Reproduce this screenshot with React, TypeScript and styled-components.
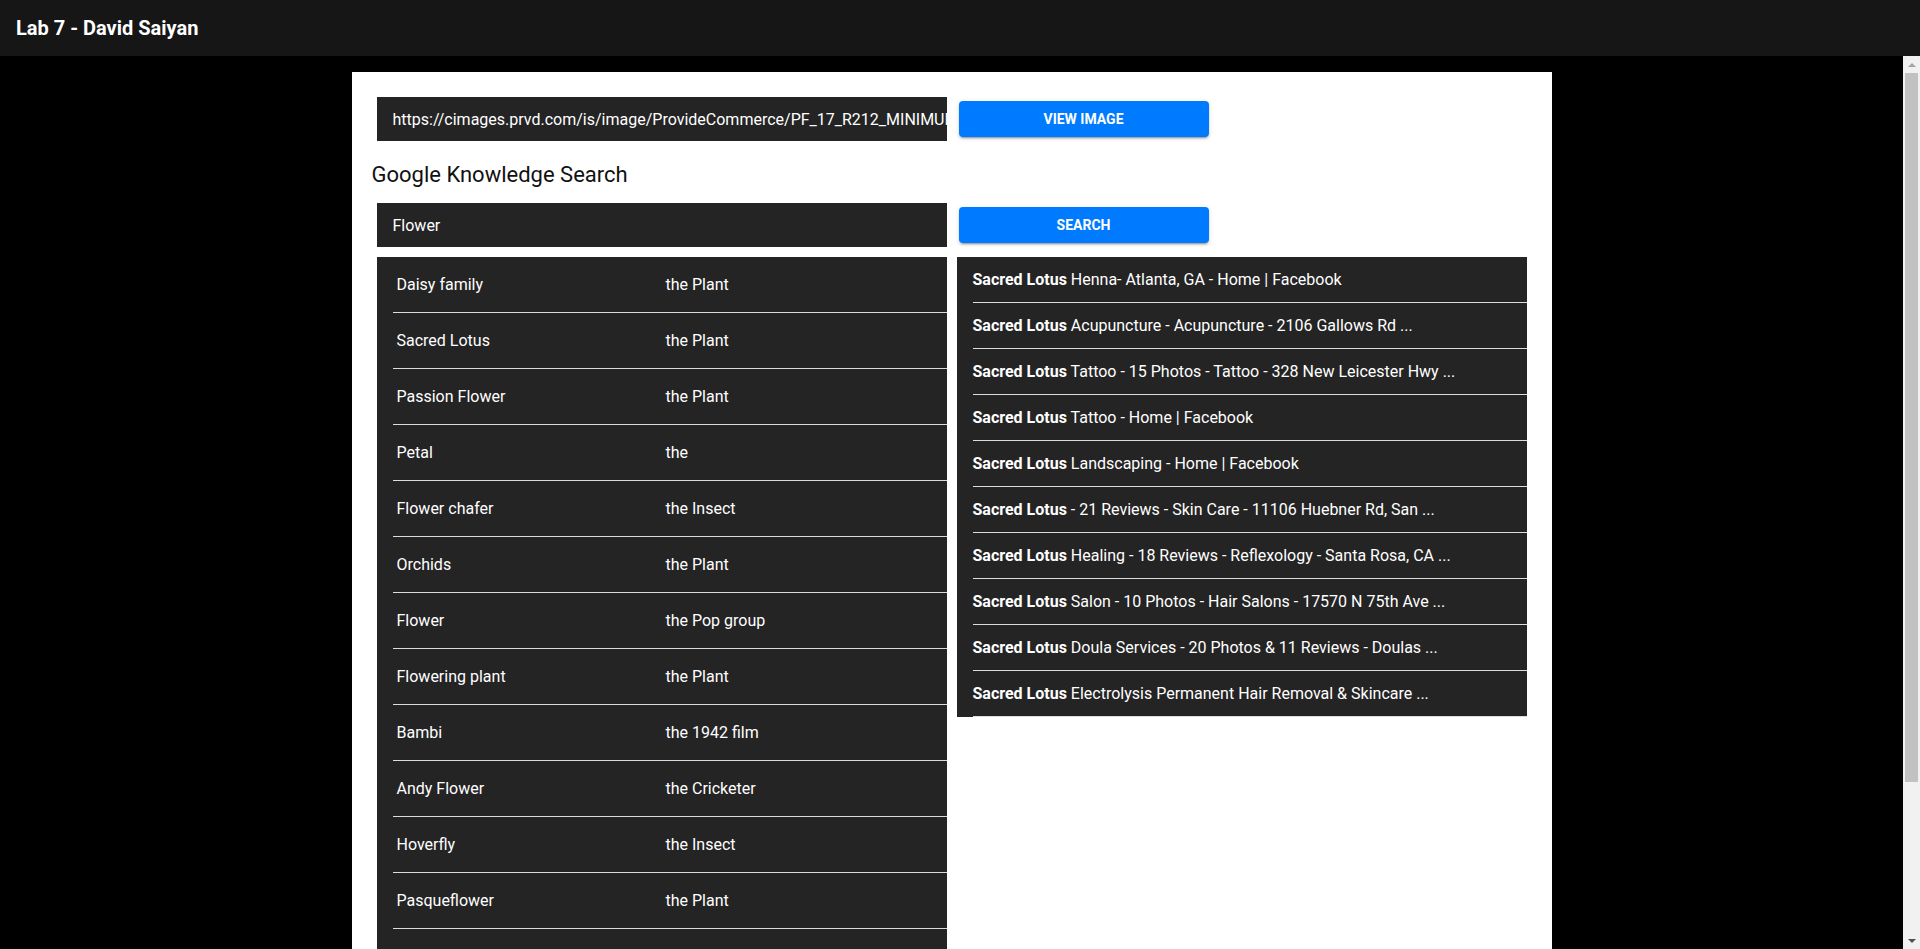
import React from "react";
import styled, { createGlobalStyle } from "styled-components";

const GlobalStyle = createGlobalStyle`
  html, body {
    margin: 0;
    padding: 0;
    height: 100%;
    overflow: hidden;
    background: #000;
    font-family: Roboto, "Liberation Sans", Arial, sans-serif;
  }
  * { box-sizing: border-box; }
`;

const AppBar = styled.header`
  height: 56px;
  background: #161616;
  display: flex;
  align-items: center;
  padding-left: 16px;
`;

const Title = styled.h1`
  margin: 0;
  font-size: 20px;
  font-weight: 700;
  color: #fff;
  letter-spacing: 0;
`;

const Body = styled.div`
  display: flex;
  height: calc(100vh - 56px);
`;

const Scroller = styled.main`
  flex: 1;
  min-width: 0;
  overflow-y: auto;
  scrollbar-width: none;
  background: #000;
  padding: 16px 0;
  &::-webkit-scrollbar {
    display: none;
  }
`;

const ScrollTrack = styled.div`
  width: 17px;
  flex: none;
  background: #f1f1f1;
  display: flex;
  flex-direction: column;
`;

const ArrowButton = styled.div`
  height: 17px;
  flex: none;
  display: flex;
  align-items: center;
  justify-content: center;
`;

const Triangle = styled.span<{ $up?: boolean; $color: string }>`
  width: 0;
  height: 0;
  border-left: 4px solid transparent;
  border-right: 4px solid transparent;
  ${(p) =>
    p.$up
      ? `border-bottom: 4px solid ${p.$color};`
      : `border-top: 4px solid ${p.$color};`}
`;

const Thumb = styled.div`
  height: 709px;
  margin: 0 2px;
  background: #c1c1c1;
`;

const TrackRest = styled.div`
  flex: 1;
`;

const Card = styled.section`
  width: 1200px;
  margin: 0 auto;
  background: #fff;
  padding: 25px 25px 20px;
`;

const InputRow = styled.div`
  display: flex;
  align-items: center;
  gap: 12px;
`;

const DarkInput = styled.input`
  width: 570px;
  height: 44px;
  background: #242424;
  border: none;
  outline: none;
  color: #fff;
  font-family: Roboto, "Liberation Sans", Arial, sans-serif;
  font-size: 16px;
  padding: 0 0 0 16px;
  margin: 0;
`;

const BlueButton = styled.button`
  width: 250px;
  height: 36px;
  background: #007bff;
  color: #fff;
  border: none;
  border-radius: 4px;
  font-family: Roboto, "Liberation Sans", Arial, sans-serif;
  font-size: 14px;
  font-weight: 700;
  letter-spacing: 0;
  text-transform: uppercase;
  cursor: pointer;
  box-shadow: 0px 3px 1px -2px rgba(0, 0, 0, 0.2),
    0px 2px 2px 0px rgba(0, 0, 0, 0.14), 0px 1px 5px 0px rgba(0, 0, 0, 0.12);
`;

const Heading = styled.h2`
  margin: 20px 0 14px -5px;
  font-size: 22px;
  line-height: 28px;
  font-weight: 400;
  color: #111;
`;

const Results = styled.div`
  display: grid;
  grid-template-columns: 570px 570px;
  gap: 10px;
  align-items: start;
  margin-top: 10px;
`;

const List = styled.ul`
  list-style: none;
  margin: 0;
  padding: 0;
  background: #242424;
  color: #fff;
  font-size: 16px;
`;

const EntityRow = styled.li`
  margin-left: 16px;
  height: 56px;
  border-bottom: 1px solid #dcdcdc;
  display: grid;
  grid-template-columns: 269px 1fr;
  align-items: center;
  padding-left: 4px;
`;

const LinkRow = styled.li`
  margin-left: 16px;
  height: 46px;
  border-bottom: 1px solid #dcdcdc;
  display: flex;
  align-items: center;
  white-space: nowrap;
`;

const Strong = styled.b`
  font-weight: 700;
`;

const entities: [string, string][] = [
  ["Daisy family", "the Plant"],
  ["Sacred Lotus", "the Plant"],
  ["Passion Flower", "the Plant"],
  ["Petal", "the"],
  ["Flower chafer", "the Insect"],
  ["Orchids", "the Plant"],
  ["Flower", "the Pop group"],
  ["Flowering plant", "the Plant"],
  ["Bambi", "the 1942 film"],
  ["Andy Flower", "the Cricketer"],
  ["Hoverfly", "the Insect"],
  ["Pasqueflower", "the Plant"],
  ["Flower Mound", "the Town"],
  ["Lotus", "the Plant"],
  ["Flower Kings", "the Band"],
];

const links: string[] = [
  "Henna- Atlanta, GA - Home | Facebook",
  "Acupuncture - Acupuncture - 2106 Gallows Rd ...",
  "Tattoo - 15 Photos - Tattoo - 328 New Leicester Hwy ...",
  "Tattoo - Home | Facebook",
  "Landscaping - Home | Facebook",
  "- 21 Reviews - Skin Care - 11106 Huebner Rd, San ...",
  "Healing - 18 Reviews - Reflexology - Santa Rosa, CA ...",
  "Salon - 10 Photos - Hair Salons - 17570 N 75th Ave ...",
  "Doula Services - 20 Photos & 11 Reviews - Doulas ...",
  "Electrolysis Permanent Hair Removal & Skincare ...",
];

export default function App() {
  return (
    <>
      <GlobalStyle />
      <AppBar>
        <Title>Lab 7 - David Saiyan</Title>
      </AppBar>
      <Body>
        <Scroller>
          <Card>
            <InputRow>
              <DarkInput defaultValue="https://cimages.prvd.com/is/image/ProvideCommerce/PF_17_R212_MINIMUM_VA0301_W1_SQ" />
              <BlueButton>View Image</BlueButton>
            </InputRow>
            <Heading>Google Knowledge Search</Heading>
            <InputRow>
              <DarkInput defaultValue="Flower" />
              <BlueButton>Search</BlueButton>
            </InputRow>
            <Results>
              <List>
                {entities.map(([name, desc]) => (
                  <EntityRow key={name}>
                    <span>{name}</span>
                    <span>{desc}</span>
                  </EntityRow>
                ))}
              </List>
              <List>
                {links.map((t) => (
                  <LinkRow key={t}>
                    <span>
                      <Strong>Sacred Lotus</Strong> {t}
                    </span>
                  </LinkRow>
                ))}
              </List>
            </Results>
          </Card>
        </Scroller>
        <ScrollTrack aria-hidden="true">
          <ArrowButton>
            <Triangle $up $color="#a3a3a3" />
          </ArrowButton>
          <Thumb />
          <TrackRest />
          <ArrowButton>
            <Triangle $color="#505050" />
          </ArrowButton>
        </ScrollTrack>
      </Body>
    </>
  );
}
